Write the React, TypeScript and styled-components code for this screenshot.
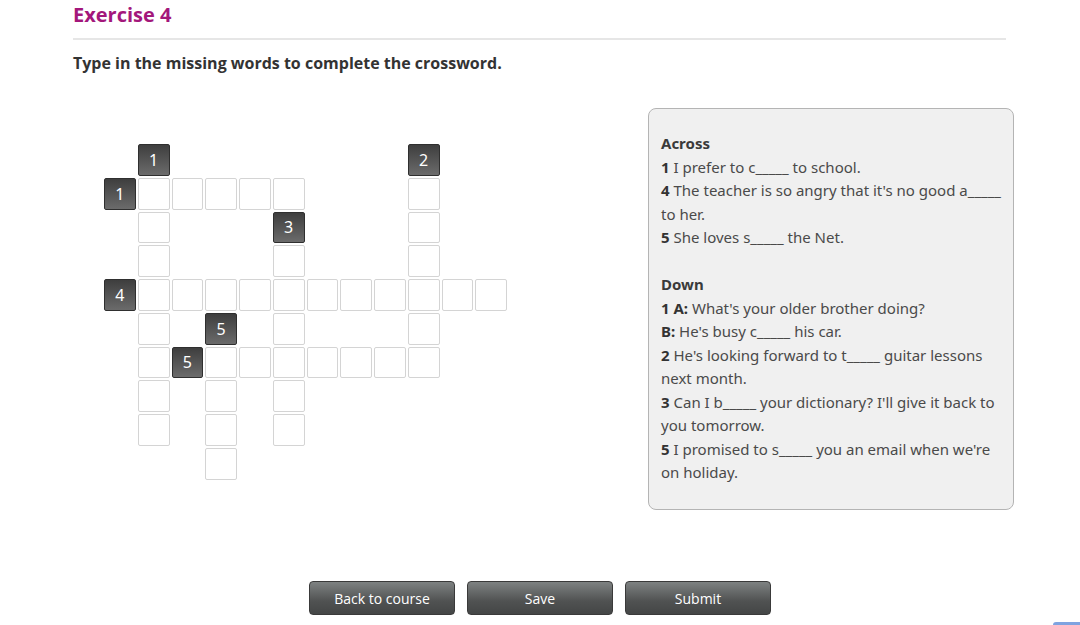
import React from 'react';
import styled, { createGlobalStyle } from 'styled-components';

const GlobalStyle = createGlobalStyle`
  html, body {
    margin: 0;
    padding: 0;
    background: #ffffff;
    font-family: 'Open Sans', 'Noto Sans', sans-serif;
  }
`;

type CellDef = { r: number; c: number; label?: string };

const labels: CellDef[] = [
  { r: 0, c: 1, label: '1' },
  { r: 0, c: 9, label: '2' },
  { r: 1, c: 0, label: '1' },
  { r: 2, c: 5, label: '3' },
  { r: 4, c: 0, label: '4' },
  { r: 5, c: 3, label: '5' },
  { r: 6, c: 2, label: '5' }
];

const blanks: [number, number[]][] = [
  [1, [1, 2, 3, 4, 5, 9]],
  [2, [1, 9]],
  [3, [1, 5, 9]],
  [4, [1, 2, 3, 4, 5, 6, 7, 8, 9, 10, 11]],
  [5, [1, 5, 9]],
  [6, [1, 3, 4, 5, 6, 7, 8, 9]],
  [7, [1, 3, 5]],
  [8, [1, 3, 5]],
  [9, [3]]
];

const cells: CellDef[] = [
  ...labels,
  ...blanks.flatMap(([r, cols]) => cols.map((c) => ({ r, c })))
];

const Page = styled.div`
  position: relative;
  width: 1080px;
  height: 625px;
  overflow: hidden;
  padding: 0 74px 0 73px;
  box-sizing: border-box;
`;

const Title = styled.h1`
  margin: 0;
  padding-top: 1px;
  font-size: 20px;
  line-height: 28px;
  font-weight: 700;
  color: #a3177b;
  padding-bottom: 9px;
  border-bottom: 2px solid #e6e6e6;
`;

const Instruction = styled.p`
  margin: 13px 0 0;
  font-size: 16px;
  line-height: 20px;
  font-weight: 700;
  color: #333333;
`;

const Workspace = styled.div`
  display: flex;
  align-items: flex-start;
  margin-top: 35px;
`;

const Board = styled.div`
  display: grid;
  flex-shrink: 0;
  grid-template-columns: repeat(12, 31.75px);
  grid-template-rows: repeat(10, 31.75px);
  gap: 2px;
  margin: 36px 0 0 31px;
`;

const Cell = styled.div<{ $dark: boolean }>`
  box-sizing: border-box;
  display: flex;
  align-items: center;
  justify-content: center;
  border-radius: 2px;
  font-family: 'Noto Sans', 'Open Sans', sans-serif;
  font-size: 16px;
  color: #ffffff;
  border: ${({ $dark }) => ($dark ? '1px solid #2f2f2f' : '1.5px solid #d4d4d4')};
  background: ${({ $dark }) =>
    $dark ? 'linear-gradient(#3e3e3e, #6b6b6b)' : '#ffffff'};
`;

const Clues = styled.div`
  box-sizing: border-box;
  flex-shrink: 0;
  width: 366px;
  height: 402px;
  margin-left: 141px;
  padding: 23px 6px 0 12px;
  background: #f0f0f0;
  border: 1px solid #b4b4b4;
  border-radius: 8px;
  font-family: 'Noto Sans', 'Open Sans', sans-serif;
  font-size: 15px;
  line-height: 23.5px;
  color: #4a4a4a;
`;

const ClueHead = styled.div<{ $gap?: boolean }>`
  font-weight: 700;
  color: #3a3a3a;
  margin-top: ${({ $gap }) => ($gap ? '23.5px' : '0')};
`;

const Clue = styled.div`
  b {
    color: #333333;
  }
`;

const Actions = styled.div`
  position: absolute;
  left: 0;
  right: 0;
  top: 581px;
  display: flex;
  justify-content: center;
  gap: 12px;
`;

const ActionButton = styled.button`
  width: 146px;
  height: 34px;
  border: 1px solid #3a3a3a;
  border-radius: 4px;
  background: linear-gradient(#7e8282, #505252 60%, #444646);
  color: #ffffff;
  font-family: 'Open Sans', sans-serif;
  font-size: 14px;
  cursor: pointer;
`;

const CornerTab = styled.div`
  position: absolute;
  left: 1053px;
  top: 622px;
  width: 27px;
  height: 4px;
  background: #7fa3e0;
  border-radius: 3px 0 0 0;
`;

const Blank = () => <>_____</>;

export default function App() {
  return (
    <Page>
      <GlobalStyle />
      <Title>Exercise 4</Title>
      <Instruction>Type in the missing words to complete the crossword.</Instruction>
      <Workspace>
        <Board>
          {cells.map((cell) => (
            <Cell
              key={`${cell.r}-${cell.c}`}
              $dark={!!cell.label}
              style={{ gridRow: cell.r + 1, gridColumn: cell.c + 1 }}
            >
              {cell.label}
            </Cell>
          ))}
        </Board>
        <Clues>
          <ClueHead>Across</ClueHead>
          <Clue><b>1</b> I prefer to c<Blank /> to school.</Clue>
          <Clue><b>4</b> The teacher is so angry that it's no good a<Blank /> to her.</Clue>
          <Clue><b>5</b> She loves s<Blank /> the Net.</Clue>
          <ClueHead $gap>Down</ClueHead>
          <Clue><b>1 A:</b> What's your older brother doing?</Clue>
          <Clue><b>B:</b> He's busy c<Blank /> his car.</Clue>
          <Clue><b>2</b> He's looking forward to t<Blank /> guitar lessons next month.</Clue>
          <Clue><b>3</b> Can I b<Blank /> your dictionary? I'll give it back to you tomorrow.</Clue>
          <Clue><b>5</b> I promised to s<Blank /> you an email when we're on holiday.</Clue>
        </Clues>
      </Workspace>
      <Actions>
        <ActionButton>Back to course</ActionButton>
        <ActionButton>Save</ActionButton>
        <ActionButton>Submit</ActionButton>
      </Actions>
      <CornerTab />
    </Page>
  );
}
